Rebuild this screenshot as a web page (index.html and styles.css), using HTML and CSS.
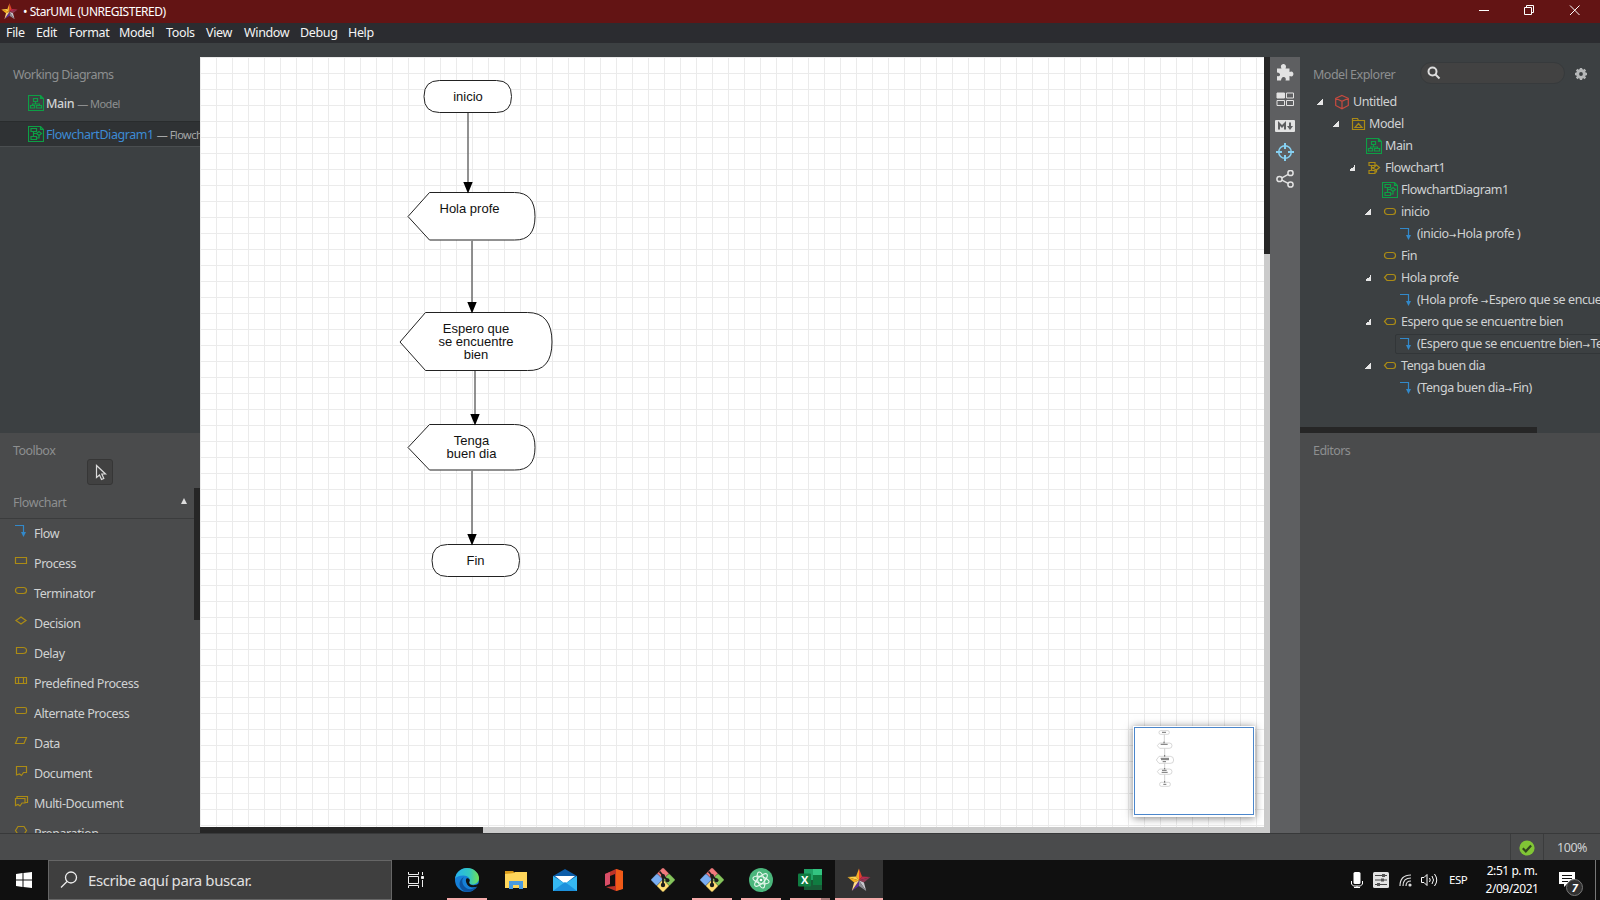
FILE: index.html
```html
<!DOCTYPE html>
<html lang="es">
<head>
<meta charset="utf-8">
<title>StarUML (UNREGISTERED)</title>
<link rel="stylesheet" href="styles.css">
</head>
<body>
<svg class="defs" width="0" height="0">
  <symbol id="star" viewBox="0 0 24 24">
    <path fill="#f7a928" d="M12 .5L9 8.400 12 12.500z"/>
    <path fill="#e0402c" d="M12 .5L15 8.400 12 12.500z"/>
    <path fill="#ffd24a" d="M9 8.400L.5 9 12 12.500z"/>
    <path fill="#f5b01e" d="M.5 9L7.100 14.500 12 12.500z"/>
    <path fill="#b82a4e" d="M15 8.400L23.500 9 12 12.500z"/>
    <path fill="#8d3a52" d="M23.500 9L16.900 14.500 12 12.500z"/>
    <path fill="#c9c9cf" d="M16.900 14.500L19.200 23 12 12.500z"/>
    <path fill="#8b8b92" d="M19.200 23L12 18 12 12.500z"/>
    <path fill="#5a2f92" d="M12 18L4.800 23 12 12.500z"/>
    <path fill="#ffd98a" d="M4.800 23L7.100 14.500 12 12.500z"/>
  </symbol>
  <symbol id="class-diagram" viewBox="0 0 16 16">
    <path fill="none" stroke="#0d9f45" stroke-width="1.200" d="M.5.5h12l3 3v12H.5zM12.500.5v3h3M5.500 3.500h4v3h-4zM7.500 6.500v2.500M4.500 10.500V9h7v1.500M2.500 10.500h4v2.500h-4zM8.500 10.500h5v2.500h-5z"/>
  </symbol>
  <symbol id="flow-diagram" viewBox="0 0 16 16">
    <path fill="none" stroke="#0d9f45" stroke-width="1.200" d="M.5.5h12l3 3v12H.5zM12.500.5v3h3M3 2.500h5.500v3H3zM5.500 5.500v2h3M5.500 7.500v3M3 10.500h5.500v3H3zM8.500 7.500L11 5.500l2.500 2L11 9.500zM11 9.500v2.500H8.500"/>
  </symbol>
  <symbol id="flowchart" viewBox="0 0 16 16">
    <path fill="none" stroke="#ab8b15" stroke-width="1.200" d="M3 2.500h6v3H3zM5.500 5.500v5M3 10.500h6v3H3zM5.500 7.500H8L10.500 5l3 2.500L10.500 10zM10.500 10v2H9"/>
  </symbol>
  <symbol id="project" viewBox="0 0 16 16">
    <path fill="none" stroke="#c84a3f" stroke-width="1.200" d="M8 1.500l6.300 2.800v7.200L8 14.800l-6.300-3.300V4.300zM1.700 4.300L8 7.300l6.300-3M8 7.300v7.500"/>
  </symbol>
  <symbol id="model" viewBox="0 0 16 16">
    <path fill="none" stroke="#ab8b15" stroke-width="1.200" d="M2.500 2.500h5l1 2h6v9h-12zM2.500 4.500h6M5 11.500h7L8.500 7.500z"/>
  </symbol>
  <symbol id="flow" viewBox="0 0 16 16">
    <path fill="none" stroke="#3289ca" stroke-width="1.200" d="M2 2.500h8.500v7"/><path fill="#3289ca" d="M8 9h5l-2.500 5z"/>
  </symbol>
  <symbol id="process" viewBox="0 0 16 16"><path class="gold" d="M2.500 4.500h11v6h-11z"/></symbol>
  <symbol id="terminator" viewBox="0 0 16 16"><rect class="gold" x="2.500" y="4.500" width="11" height="6" rx="3"/></symbol>
  <symbol id="display" viewBox="0 0 16 16"><path class="gold" d="M2.500 7.500l2.500-3h6q2.500 0 2.500 3t-2.500 3H5z"/></symbol>
  <symbol id="decision" viewBox="0 0 16 16"><path class="gold" d="M3 7.500l5-3.500 5 3.500-5 3.500z"/></symbol>
  <symbol id="delay" viewBox="0 0 16 16"><path class="gold" d="M3.500 4.500H10q3.500 0 3.500 3t-3.500 3H3.500z"/></symbol>
  <symbol id="predefined" viewBox="0 0 16 16"><path class="gold" d="M2.500 4.500h11v6h-11zM5.500 4.500v6M10.500 4.500v6"/></symbol>
  <symbol id="alternate" viewBox="0 0 16 16"><rect class="gold" x="2.500" y="4.500" width="11" height="6" rx="1.500"/></symbol>
  <symbol id="data" viewBox="0 0 16 16"><path class="gold" d="M5 4.500h8.500l-2.500 6H2.500z"/></symbol>
  <symbol id="document" viewBox="0 0 16 16"><path class="gold" d="M3.500 3.500h10v6h-3l-2 3-2-1.500-3 1z"/></symbol>
  <symbol id="multidoc" viewBox="0 0 16 16"><path class="gold" d="M2.500 5.500h9.500v4.500h-3l-2 3-2-1.500-2.500 1zM4 5.500v-2h10.500v6H12"/></symbol>
  <symbol id="preparation" viewBox="0 0 16 16"><path class="gold" d="M2.500 7.500l2.500-4h6l2.500 4-2.500 4H5z"/></symbol>
  <symbol id="git" viewBox="0 0 24 24">
    <g stroke="#111" stroke-width=".4">
    <rect x="7.300" y="1.300" width="9.200" height="9.200" rx="1" fill="#f07a7c" transform="rotate(45 12 6)"/>
    <rect x="1.300" y="7.300" width="9.200" height="9.200" rx="1" fill="#7aaef2" transform="rotate(45 6 12)"/>
    <rect x="13.300" y="7.300" width="9.200" height="9.200" rx="1" fill="#85c45c" transform="rotate(45 18 12)"/>
    <rect x="7.300" y="13.300" width="9.200" height="9.200" rx="1" fill="#ffdd73" transform="rotate(45 12 18)"/></g>
    <path fill="none" stroke="#1b1b1b" stroke-width="1.800" d="M8.500 3.500l3.500 4v10M12 8l4.500 4"/>
    <circle cx="12" cy="8" r="2" fill="#1b1b1b"/><circle cx="16.500" cy="12.300" r="2" fill="#1b1b1b"/><circle cx="12" cy="17" r="2.200" fill="#1b1b1b"/>
  </symbol>
</svg>

<header class="titlebar">
  <svg class="app-icon" width="17" height="17"><use href="#star"/></svg>
  <span class="title">• StarUML (UNREGISTERED)</span>
  <svg class="window-buttons" width="120" height="23" viewBox="0 0 120 23" fill="none" stroke="#fff">
    <path d="M9 10.500h10M54.500 7.500h7v7h-7zM56.500 7.500v-2h7v7h-2M100 5.500l9.500 9.500M109.500 5.500L100 15"/>
  </svg>
</header>
<nav class="menubar">
  <span class="m-file">File</span><span class="m-edit">Edit</span><span class="m-format">Format</span><span class="m-model">Model</span><span class="m-tools">Tools</span><span class="m-view">View</span><span class="m-window">Window</span><span class="m-debug">Debug</span><span>Help</span>
</nav>
<div class="strip"></div>

<main class="workspace">
  <aside class="left">
    <section class="working">
      <h2>Working Diagrams</h2>
      <div class="diagram-row"><svg width="16" height="16"><use href="#class-diagram"/></svg><b class="d-main">Main</b><small>— Model</small></div>
      <div class="diagram-row selected"><svg width="16" height="16"><use href="#flow-diagram"/></svg><span class="d-name">FlowchartDiagram1</span><small>— Flowchart1</small></div>
    </section>
    <section class="toolbox">
      <h2>Toolbox</h2>
      <div class="pointer-tool"><svg width="24" height="24" viewBox="0 0 24 24"><path fill="none" stroke="#dcdcdc" stroke-width="1.200" d="M8.500 5.500v12l3-2.500 2 4.500 2.300-1-2-4.500h3.700z"/></svg></div>
      <div class="tool-area">
        <div class="tool-list">
          <div class="group"><span>Flowchart</span><i class="collapse"></i></div>
          <div class="tool"><svg width="16" height="16"><use href="#flow"/></svg><span>Flow</span></div>
          <div class="tool"><svg width="16" height="16"><use href="#process"/></svg><span>Process</span></div>
          <div class="tool"><svg width="16" height="16"><use href="#terminator"/></svg><span>Terminator</span></div>
          <div class="tool"><svg width="16" height="16"><use href="#decision"/></svg><span>Decision</span></div>
          <div class="tool"><svg width="16" height="16"><use href="#delay"/></svg><span>Delay</span></div>
          <div class="tool"><svg width="16" height="16"><use href="#predefined"/></svg><span>Predefined Process</span></div>
          <div class="tool"><svg width="16" height="16"><use href="#alternate"/></svg><span>Alternate Process</span></div>
          <div class="tool"><svg width="16" height="16"><use href="#data"/></svg><span>Data</span></div>
          <div class="tool"><svg width="16" height="16"><use href="#document"/></svg><span>Document</span></div>
          <div class="tool"><svg width="16" height="16"><use href="#multidoc"/></svg><span>Multi-Document</span></div>
          <div class="tool"><svg width="16" height="16"><use href="#preparation"/></svg><span>Preparation</span></div>
        </div>
        <div class="tool-scroll"></div>
      </div>
    </section>
  </aside>

  <section class="editor">
    <div class="canvas">
      <svg class="diagram" width="1064" height="770" viewBox="200 57 1064 770">
        <g fill="#fff" stroke="#222">
          <path d="M439.500 80.500H496.500Q511.500 80.500 511.500 96.500T496.500 112.500H439.500Q424 112.500 424 96.500T439.500 80.500z"/>
          <path d="M408 216.500L429.500 192.500H514.500Q535 192.500 535 216.500T514.500 240H429.500z"/>
          <path d="M400 342L425.500 312.500H527.500Q552 312.500 552 342T527.500 370.500H425.500z"/>
          <path d="M408 447.500L429.500 424.500H514.500Q535 424.500 535 447.500T514.500 470H429.500z"/>
          <path d="M447.500 544.500H504.500Q519.500 544.500 519.500 560.500T504.500 576.500H447.500Q432 576.500 432 560.500T447.500 544.500z"/>
        </g>
        <path fill="none" stroke="#6e6e6e" stroke-width="1.500" d="M468 113v70M472 241v62M475 371v44M472 471v64"/>
        <path d="M463.300 182h9.400L468 193.500zM467.300 302h9.400L472 313.500zM470.300 414h9.400L475 425.500zM467.300 534h9.400L472 545.500z"/>
        <g class="node-text">
          <text x="468" y="101">inicio</text>
          <text x="469.500" y="213">Hola profe</text>
          <text x="476" y="333">Espero que</text><text x="476" y="346">se encuentre</text><text x="476" y="359">bien</text>
          <text x="471.500" y="445">Tenga</text><text x="471.500" y="458">buen dia</text>
          <text x="475.500" y="565">Fin</text>
        </g>
      </svg>
      <div class="minimap">
        <svg width="118" height="86" viewBox="75 51 354 258">
          <path fill="none" stroke="#bbb" stroke-width="2" d="M163 70v30M164 112v26M164 156v22M164 190v24"/>
          <g fill="#fff" stroke="#c4c4c4" stroke-width="2"><rect x="147" y="59" width="31" height="11" rx="5"/><path d="M142 104l7-8h29q8 0 8 8t-8 8h-29zM139 147l8-11h34q10 0 10 11t-10 10h-34zM142 182l7-8h29q8 0 8 8t-8 8h-29z"/><rect x="149" y="214" width="32" height="12" rx="5"/></g>
          <path stroke="#555" stroke-width="2.500" d="M156 64h12M152 100h21M152 142h25M153 146h24M158 152h10M156 178h14M155 184h18M160 220h9M162 92v5M164 132v5M164 171v4M164 210v5"/>
        </svg>
      </div>
    </div>
    <div class="vscroll"><div></div></div>
    <div class="hscroll"><div></div></div>
  </section>

  <div class="icon-strip">
    <svg width="18" height="18" viewBox="0 0 18 18"><path fill="#e2e2e2" d="M1 5.500h4.500Q4.500 4 5 2.500 6 .5 8 1t2 2.500Q10 4.500 9.500 5.500h4V9Q16 8 17 9.500t0 3Q16 14 13.500 13v4.500H9.500Q10.500 14.500 8 14t-3 3.500H1V13q2.500 1 3-1T1 9.500z"/></svg>
    <svg width="18" height="18" viewBox="0 0 18 18" fill="none" stroke="#e2e2e2"><path fill="#e2e2e2" d="M1 3h7.500v5H1z"/><path d="M10.500 3h7v5h-7zM1 10.500h7.500v5H1zM10.500 10.500h7v5h-7z"/></svg>
    <svg width="20" height="18" viewBox="0 0 20 18"><rect y="3" width="20" height="12" rx="1" fill="#e2e2e2"/><path fill="none" stroke="#5e5f61" stroke-width="2" d="M4 12.500V6.500l3 3 3-3v6"/><path fill="#5e5f61" d="M14 5.500h2V9h2l-3 4-3-4h2z"/></svg>
    <svg width="18" height="18" viewBox="0 0 18 18" fill="none" stroke="#86d0f2" stroke-width="1.500"><circle cx="9" cy="9" r="6.300"/><path stroke-width="2" d="M9 0v6M9 12v6M0 9h6M12 9h6"/></svg>
    <svg width="18" height="18" viewBox="0 0 18 18" fill="none" stroke="#e2e2e2" stroke-width="1.500"><circle cx="3.500" cy="9" r="2.600"/><circle cx="14.500" cy="3" r="2.600"/><circle cx="14.500" cy="14.500" r="2.600"/><path d="M5.900 7.800l6.300-3.500M5.900 10.200l6.300 3.200"/></svg>
  </div>

  <aside class="right">
    <section class="explorer">
      <div class="explorer-head">
        <h2>Model Explorer</h2>
        <div class="search"><svg width="14" height="14" viewBox="0 0 14 14" fill="none" stroke="#ddd" stroke-width="2"><circle cx="5.500" cy="5.500" r="4"/><path d="M8.500 8.500l4 4"/></svg></div>
        <svg class="gear" width="14" height="14" viewBox="0 0 14 14"><circle cx="7" cy="7" r="3.400" fill="none" stroke="#b5b7b8" stroke-width="3"/><path stroke="#b5b7b8" stroke-width="2.400" d="M7 1v2M7 11v2M1 7h2M11 7h2M2.700 2.700l1.500 1.500M9.800 9.800l1.500 1.500M2.700 11.300l1.500-1.500M9.800 4.200l1.500-1.500"/></svg>
      </div>
      <div class="tree">
        <div class="node d0"><i class="open"></i><svg width="16" height="16"><use href="#project"/></svg><span>Untitled</span></div>
        <div class="node d1"><i class="open"></i><svg width="16" height="16"><use href="#model"/></svg><span>Model</span></div>
        <div class="node d2"><i></i><svg width="16" height="16"><use href="#class-diagram"/></svg><span>Main</span></div>
        <div class="node d2"><i class="open"></i><svg width="16" height="16"><use href="#flowchart"/></svg><span>Flowchart1</span></div>
        <div class="node d3"><i></i><svg width="16" height="16"><use href="#flow-diagram"/></svg><span>FlowchartDiagram1</span></div>
        <div class="node d3"><i class="open"></i><svg width="16" height="16"><use href="#terminator"/></svg><span>inicio</span></div>
        <div class="node d4"><i></i><svg width="16" height="16"><use href="#flow"/></svg><span>(inicio<b>→</b>Hola profe )</span></div>
        <div class="node d3"><i></i><svg width="16" height="16"><use href="#terminator"/></svg><span>Fin</span></div>
        <div class="node d3"><i class="open"></i><svg width="16" height="16"><use href="#display"/></svg><span>Hola profe</span></div>
        <div class="node d4"><i></i><svg width="16" height="16"><use href="#flow"/></svg><span>(Hola profe <b>→</b>Espero que se encuentre bien)</span></div>
        <div class="node d3"><i class="open"></i><svg width="16" height="16"><use href="#display"/></svg><span>Espero que se encuentre bien</span></div>
        <div class="node d4"><i></i><div class="picked"><svg width="16" height="16"><use href="#flow"/></svg><span>(Espero que se encuentre bien<b>→</b>Tenga buen dia)</span></div></div>
        <div class="node d3"><i class="open"></i><svg width="16" height="16"><use href="#display"/></svg><span>Tenga buen dia</span></div>
        <div class="node d4"><i></i><svg width="16" height="16"><use href="#flow"/></svg><span>(Tenga buen dia<b>→</b>Fin)</span></div>
      </div>
      <div class="tree-scroll"></div>
    </section>
    <section class="editors"><h2>Editors</h2></section>
  </aside>
</main>

<footer class="status">
  <div class="check"><svg width="16" height="16" viewBox="0 0 16 16"><circle cx="8" cy="8" r="7.600" fill="#80c535"/><path fill="none" stroke="#30451d" stroke-width="2.200" d="M3.800 8.300l3 3 5.300-5.800"/></svg></div>
  <div class="zoom">100%</div>
</footer>

<div class="taskbar">
  <div class="start"><svg width="16" height="16" viewBox="0 0 16 16"><path fill="#fff" d="M0 2l6.500-1v6.500H0zM7.500.9L16 0v7.500H7.500zM0 8.500h6.500V15L0 14zM7.500 8.500H16V16l-8.500-1z"/></svg></div>
  <div class="searchbox"><svg width="18" height="18" viewBox="0 0 18 18" fill="none" stroke="#eee" stroke-width="1.300"><circle cx="11" cy="6.500" r="5.500"/><path d="M7 10.500L1 16.500"/></svg><span>Escribe aquí para buscar.</span></div>
  <div class="slot taskview"><svg width="16" height="16" viewBox="0 0 16 16" fill="none" stroke="#eee"><path d="M.5 0v2.500h10V0M.5 16v-2.500h10V16M.5 4.500h10v7H.5zM14.500 0v3M14.500 8v7"/><path fill="#fff" d="M13.500 4.500h2v2h-2z"/></svg></div>
  <div class="slot running"><svg width="24" height="24" viewBox="0 0 24 24">
    <defs><linearGradient id="eg" x1="0" x2="1"><stop offset="0" stop-color="#26b2ee"/><stop offset=".6" stop-color="#33c8c0"/><stop offset="1" stop-color="#72e253"/></linearGradient></defs>
    <circle cx="12" cy="12" r="12" fill="#1680d8"/><path fill="url(#eg)" d="M0 11C1 4 6 0 12 0c7 0 12 5 12 10 0 4-3 6.500-6.500 6.500-3 0-4.500-1.500-3-3C16 11 13 7.500 8.500 7.500 4 7.500 1 9 0 11z"/><path fill="#0d529f" d="M9 9c-3 3-2 9 3 11.500 3 1.500 7 .5 10.200-2.500C19 23.500 13 25 9 23 3 20 3 12 9 9z"/><path fill="#111" d="M11.500 10.500c2-1 4 1 3 3-1 2 1 3.700 4 3.700 2 0 4-.7 4.800-1.700l1.200.5-1.500 2.500c-4 1.500-9 1-10.800-2-1.500-2.500-1.700-4.500-.7-6z"/></svg></div>
  <div class="slot"><svg width="22" height="20" viewBox="0 0 22 20"><path fill="#d99a19" d="M0 1h8l2 2v4H0z"/><path fill="#ffd65b" d="M0 4l9-1 1-1h12v16H0z"/><path fill="#4a9be0" d="M4 11h14v8h-4v-4H8v4H4z"/></svg></div>
  <div class="slot"><svg width="24" height="24" viewBox="0 0 24 24"><path fill="#0c5ca8" d="M0 8l12-7 12 7v7H0z"/><path fill="#fff" d="M2 8h20l-10 8z"/><path fill="#35b8f1" d="M0 8l12 7.500L24 8v15H0z"/><path fill="#1c91dc" d="M0 23l12-9 12 9z"/></svg></div>
  <div class="slot"><svg width="20" height="24" viewBox="0 0 20 24"><path fill="#bd3328" d="M12 1l6 2v18l-6 2-10-4 9-1V6L6 8v8l-5 2V6z"/><path fill="#f05a18" d="M12 1l7 2v18l-7 2z"/><path fill="#d94e68" d="M1 6l5-2v12l-5 2z"/></svg></div>
  <div class="slot"><svg width="24" height="24"><use href="#git"/></svg></div>
  <div class="slot running"><svg width="24" height="24"><use href="#git"/></svg></div>
  <div class="slot running"><svg width="24" height="24" viewBox="0 0 24 24"><circle cx="12" cy="12" r="12" fill="#4bb67c"/><g fill="none" stroke="#e6f7ed" stroke-width="1.100"><ellipse cx="12" cy="12" rx="8.300" ry="3.300" transform="rotate(15 12 12)"/><ellipse cx="12" cy="12" rx="8.300" ry="3.300" transform="rotate(75 12 12)"/><ellipse cx="12" cy="12" rx="8.300" ry="3.300" transform="rotate(135 12 12)"/></g><circle cx="12" cy="12" r="1.300" fill="#fff"/></svg></div>
  <div class="slot running multiple"><svg width="24" height="24" viewBox="0 0 24 24"><path fill="#21a366" d="M6 1h9v11H6z"/><path fill="#33c481" d="M15 1h9v6h-9z"/><path fill="#107c41" d="M6 12h18v5H6zM15 7h9v5h-9z"/><path fill="#185c37" d="M6 12h9v10H6zM15 17h9v5H15z"/><rect y="5.500" width="13" height="13" rx="1" fill="#107c41"/><text class="excel-x" x="6.500" y="16">X</text></svg></div>
  <div class="slot running active"><svg width="24" height="24"><use href="#star"/></svg></div>
  <div class="tray">
    <svg class="mic" width="12" height="18" viewBox="0 0 12 18"><rect x="2.500" y="1" width="7" height="12" rx="1.500" fill="#fff"/><path fill="none" stroke="#fff" d="M.5 10v3l2 2h7l2-2v-3M6 15v2M3 16.500h6"/></svg>
    <svg class="mixer" width="16" height="16" viewBox="0 0 16 16"><rect width="16" height="16" rx="1.500" fill="#e3e3e3"/><path fill="none" stroke="#444" d="M2 3.500h12M2 8h12M2 12.500h12"/><path fill="#555" d="M9 2h3v3H9zM8 6.500h3v3H8zM4 11h3v3H4z"/></svg>
    <svg class="wifi" width="14" height="14" viewBox="0 0 14 14" fill="none" stroke="#ddd" stroke-width="1.200"><path d="M1 13Q1 2 12 2M4 13Q4 5 12 5M7 13q0-5 5-5"/><circle cx="11" cy="12" r="1" fill="#fff"/></svg>
    <svg class="sound" width="17" height="14" viewBox="0 0 17 14" fill="none" stroke="#fff"><path d="M.5 4.500h2.500l3-3v11l-3-3H.5zM8.500 5q1.500 2 0 4M11 3q3 4 0 8M13.500 1q4.500 6 0 12"/></svg>
    <span class="lang">ESP</span>
    <div class="clock"><span>2:51 p. m.</span><span>2/09/2021</span></div>
    <svg class="notice" width="26" height="26" viewBox="0 0 26 26"><path fill="#fff" d="M1 1h16v12h-8l-3 3v-3H1z"/><path stroke="#111" d="M4 4.500h10M4 7.500h10M4 10.500h6"/><circle cx="16.500" cy="16.500" r="8" fill="#303030" stroke="#777"/><text class="notice-count" x="16.500" y="21">7</text></svg>
    <div class="desktop-edge"></div>
  </div>
</div>
</body>
</html>
```

FILE: styles.css
```css
* { box-sizing: border-box; }
body { margin: 0; width: 1600px; height: 900px; overflow: hidden; display: flex; flex-direction: column; font-family: "Noto Sans", "Open Sans", sans-serif; font-size: 12.5px; letter-spacing: -0.43px; color: #d0d2d3; background: #3c4042; }
svg { display: block; flex: none; }
.defs { position: absolute; }
h2 { margin: 0; font-size: 12.5px; font-weight: 400; color: #8d8f90; line-height: 20px; white-space: nowrap; letter-spacing: -0.55px; }
.gold { fill: none; stroke: #ab8b15; stroke-width: 1.2; }

.titlebar { height: 23px; background: #631414; display: flex; align-items: center; color: #fff; flex: none; }
.app-icon { margin-left: 1px; }
.title { margin-left: 5px; font-size: 12px; letter-spacing: -0.48px; }
.window-buttons { margin-left: auto; margin-right: 10px; }
.menubar { height: 20px; background: #2b2c30; display: flex; align-items: center; flex: none; padding: 0 0 2px 6px; color: #f4f4f4; font-size: 12.5px; letter-spacing: -0.35px; }
.m-file { width: 30px; }
.m-edit { width: 33px; }
.m-format { width: 50px; }
.m-model { width: 47px; }
.m-tools { width: 40px; }
.m-view { width: 38px; }
.m-window { width: 56px; }
.m-debug { width: 48px; }
.strip { height: 14px; flex: none; background: #3c4042; }

.workspace { height: 776px; display: grid; grid-template-columns: 200px 1070px 30px 300px; flex: none; }
.left, .right { display: flex; flex-direction: column; min-width: 0; overflow: hidden; height: 776px; }
.working { height: 376px; flex: none; background: #3c4042; overflow: hidden; }
.working h2 { padding: 8px 0 0 13px; }
.diagram-row { height: 26px; margin-top: 5px; padding-left: 28px; display: flex; align-items: center; white-space: nowrap; }
.diagram-row > :nth-child(2) { margin-left: 2px; margin-right: 3px; }
.diagram-row b { font-weight: 500; }
.diagram-row small { font-size: 11px; letter-spacing: -0.5px; color: #8d8f90; }
.selected { background: #2f3234; border-top: 1px solid #292c2d; border-bottom: 1px solid #4a4e50; }
.selected small { color: #a5a7a8; }
.d-name { color: #3d8bd4; }

.toolbox { height: 400px; flex: none; background: #4a4b4c; display: flex; flex-direction: column; overflow: hidden; }
.toolbox h2 { padding: 8px 0 0 13px; height: 26px; }
.pointer-tool { width: 26px; height: 26px; margin-left: 87px; background: #414141; border: 1px solid #363636; border-radius: 3px; flex: none; }
.tool-area { margin-top: 3px; height: 345px; display: flex; overflow: hidden; }
.tool-list { width: 194px; flex: none; }
.group { height: 31px; border-bottom: 1px solid #3b3c3d; padding: 0 7px 1px 13px; display: flex; justify-content: space-between; align-items: center; color: #8d8f90; }
.collapse { margin-top: -3px; border: 3.5px solid transparent; border-top: 0; border-bottom: 6px solid #ddd; }
.tool { height: 30px; display: flex; align-items: center; padding-left: 13px; gap: 5px; }
.tool svg { margin-top: -6px; }
.tool span { margin-top: -2px; }
.tool-scroll { width: 6px; height: 132px; background: #262626; }

.editor { display: grid; grid-template: 770px 6px / 1064px 6px; }
.canvas { position: relative; background-color: #fff; background-image: linear-gradient(90deg, #ebebeb 1px, transparent 1px), linear-gradient(#ebebeb 1px, transparent 1px); background-size: 16px 16px; }
.node-text { font-family: "Liberation Sans", Arial, sans-serif; font-size: 13px; letter-spacing: 0; fill: #111; text-anchor: middle; }
.minimap { position: absolute; right: 9px; bottom: 10px; width: 122px; height: 91px; padding: 1px 1px 2px; background: #fff; box-shadow: 0 1px 8px rgba(0,0,0,.5); }
.minimap svg { width: 120px; height: 88px; border: 1px solid #4b86cb; }
.vscroll { background: #cbcbcb; }
.vscroll div { height: 197px; background: #262626; }
.hscroll { grid-column: 1 / 3; background: #cbcbcb; }
.hscroll div { width: 283px; height: 6px; background: #262626; }
.icon-strip { background: #5e5f61; padding-top: 6px; display: flex; flex-direction: column; align-items: center; gap: 8.8px; }

.explorer { height: 376px; flex: none; display: flex; flex-direction: column; overflow: hidden; background: #3c4042; }
.explorer-head { height: 34px; display: flex; padding-left: 13px; flex: none; }
.explorer-head h2 { width: 107px; padding-top: 8px; letter-spacing: -0.5px; }
.search { width: 145px; height: 22px; margin-top: 5px; padding: 3px 6px; background: #424242; border: 1px solid #373a3c; border-radius: 11px; }
.gear { margin: 10px 0 0 9px; }
.tree { flex: 1; overflow: hidden; }
.node { height: 22px; display: flex; align-items: center; white-space: nowrap; }
.node i { width: 6px; height: 6px; margin-right: 11px; flex: none; }
.node .open { background: linear-gradient(135deg, transparent 50%, #e6e6e6 50%); }
.node span { margin: -2px 0 0 3px; }
.node b { display: inline-block; width: 8px; font: 9px/1 "DejaVu Sans", sans-serif; }
.d0 { padding-left: 17px; }
.d1 { padding-left: 33px; }
.d2 { padding-left: 49px; }
.d3 { padding-left: 65px; }
.d4 { padding-left: 81px; }
.picked { display: flex; align-items: center; height: 20px; margin-left: -3px; padding-left: 2px; border: 1px solid #323638; border-radius: 2px; }
.tree-scroll { width: 237px; height: 6px; background: #262626; flex: none; }
.editors { flex: 1; background: #4a4b4c; padding: 8px 13px; }

.status { height: 27px; flex: none; background: #4a4b4c; border-top: 1px solid #38393a; display: flex; justify-content: flex-end; }
.check { width: 34px; padding-top: 1px; border: 1px solid #3b3c3d; border-width: 0 1px; display: grid; place-items: center; }
.zoom { width: 56px; text-align: center; line-height: 27px; }

.taskbar { height: 40px; flex: none; background: #101010; display: flex; color: #fff; }
.start { width: 48px; display: grid; place-items: center; }
.searchbox { width: 344px; background: #3f3f3f; border: 1px solid #666; display: flex; align-items: center; padding-left: 11px; font-size: 15px; color: #e0e0e0; letter-spacing: -0.42px; }
.searchbox span { margin-left: 10px; }
.slot { width: 48px; margin-right: 1px; display: grid; place-items: center; position: relative; }
.taskview { margin-right: 3px; }
.running::after { content: ""; position: absolute; left: 4px; right: 4px; bottom: 0; height: 2px; background: #f5aaaa; }
.multiple::after { background: linear-gradient(90deg, #f5aaaa 31px, #a97878 31px); }
.active { background: #333; }
.active::after { left: 0; right: 0; }
.excel-x { font: 700 11px "Open Sans", sans-serif; fill: #fff; text-anchor: middle; }
.tray { margin-left: auto; display: flex; align-items: center; }
.mixer { margin-left: 10px; }
.wifi { margin-left: 10px; }
.sound { margin-left: 8px; }
.lang { width: 22px; margin: -2px 0 0 11px; font-size: 11.5px; letter-spacing: -0.5px; }
.clock { width: 64px; margin-left: 9px; display: flex; flex-direction: column; align-items: center; font-size: 12px; line-height: 18px; letter-spacing: -0.45px; }
.notice { margin: 7px 0 0 14px; }
.notice-count { font: italic 700 11px "Open Sans", sans-serif; fill: #fff; text-anchor: middle; }
.desktop-edge { width: 5px; height: 40px; margin-left: 11px; border-left: 1px solid #777; }
```
